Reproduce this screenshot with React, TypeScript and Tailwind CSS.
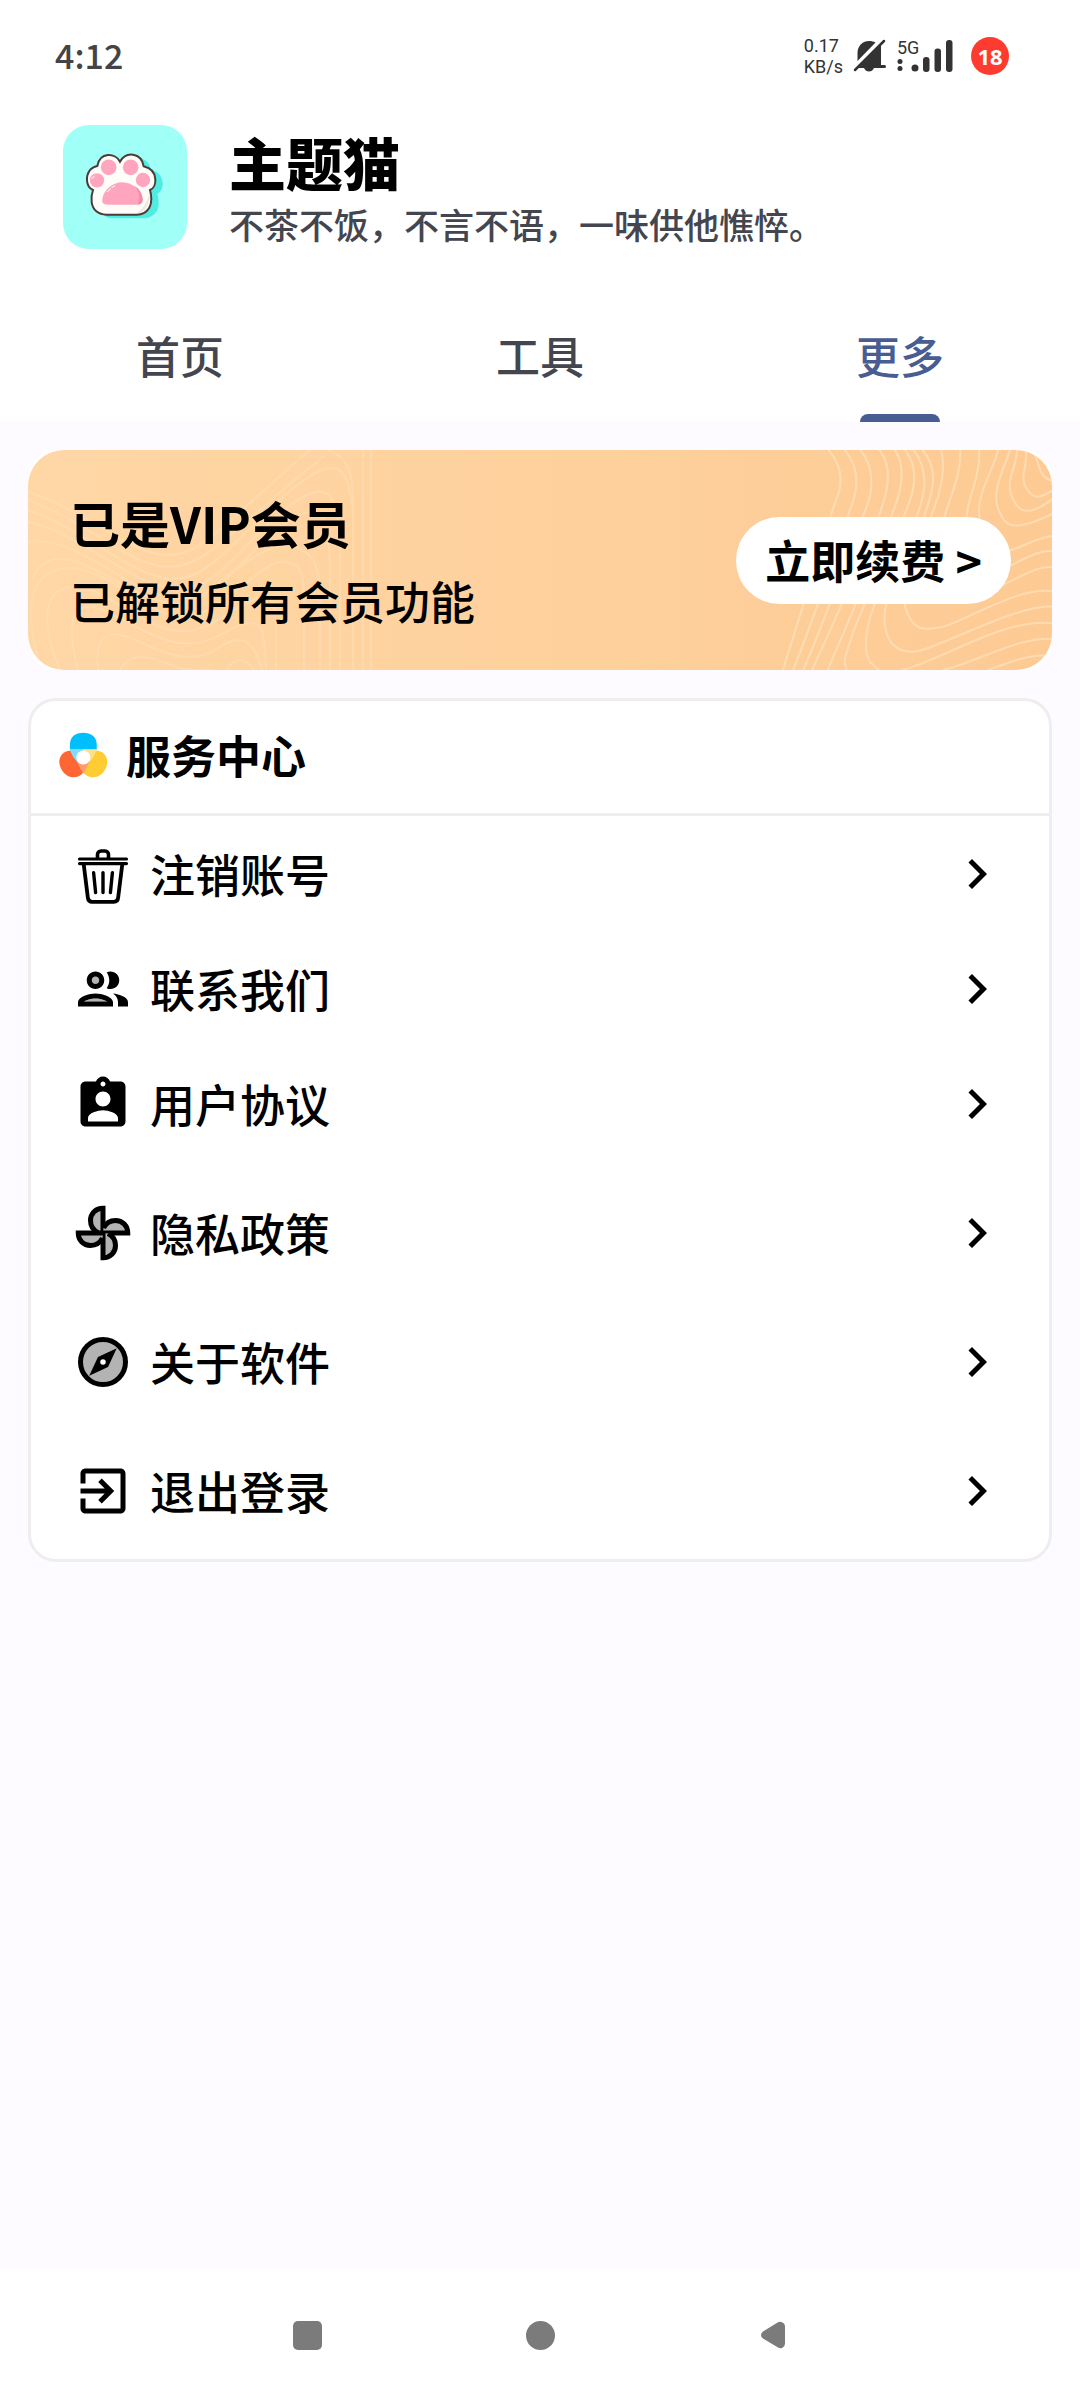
import type { ReactNode } from 'react'

const GREY = '#b3b3b3'

function TrashIcon() {
  return (
    <svg viewBox="0 0 60 60" className="size-[60px]" fill="none" stroke="#000" strokeLinecap="round">
      <path d="M24.5 14V10.5a3.5 3.5 0 0 1 3.5-3.5h4a3.5 3.5 0 0 1 3.5 3.5V14" strokeWidth="3.6" />
      <path d="M6.5 15h47M6.5 19.6h47" strokeWidth="3.2" />
      <path
        d="M10.8 21l4.1 33q.5 3.8 4.2 3.8h21.8q3.7 0 4.2-3.8L49.2 21"
        strokeWidth="3.8"
        strokeLinejoin="round"
      />
      <path d="M20.6 28.6l2 20M30 28.6v20M39.4 28.6l-2 20" strokeWidth="3.4" />
    </svg>
  )
}

function PeopleIcon() {
  return (
    <svg viewBox="0 0 24 24" className="size-[60px]">
      <circle cx="9" cy="8.5" r="1.6" fill={GREY} />
      <path d="M4.34 17c.84-.58 2.87-1.25 4.66-1.25s3.82.67 4.66 1.25H4.34z" fill={GREY} />
      <path d="M9 13.75c-2.34 0-7 1.17-7 3.5V19h14v-1.75c0-2.33-4.66-3.5-7-3.5zM4.34 17c.84-.58 2.87-1.25 4.66-1.25s3.82.67 4.66 1.25H4.34zM9 12c1.93 0 3.5-1.57 3.5-3.5S10.93 5 9 5 5.5 6.57 5.5 8.5 7.07 12 9 12zm0-5c.83 0 1.5.67 1.5 1.5S9.83 10 9 10s-1.5-.67-1.5-1.5S8.17 7 9 7zm7.04 6.81c1.16.84 1.96 1.96 1.96 3.44V19h4v-1.75c0-2.02-3.5-3.17-5.96-3.44zM15 12c1.93 0 3.5-1.57 3.5-3.5S16.93 5 15 5c-.54 0-1.04.13-1.5.35.63.89 1 1.98 1 3.15s-.37 2.26-1 3.15c.46.22.96.35 1.5.35z" />
    </svg>
  )
}

function BadgeIcon() {
  return (
    <svg viewBox="0 0 24 24" className="size-[60px]">
      <path d="M19 3h-4.18C14.4 1.84 13.3 1 12 1c-1.3 0-2.4.84-2.82 2H5c-1.1 0-2 .9-2 2v14c0 1.1.9 2 2 2h14c1.1 0 2-.9 2-2V5c0-1.1-.9-2-2-2zm-7 0c.55 0 1 .45 1 1s-.45 1-1 1-1-.45-1-1 .45-1 1-1zm0 4c1.66 0 3 1.34 3 3s-1.34 3-3 3-3-1.34-3-3 1.34-3 3-3zm6 12H6v-1.4c0-2 4-3.1 6-3.1s6 1.1 6 3.1V19z" />
    </svg>
  )
}

function FanIcon() {
  return (
    <svg viewBox="0 0 24 24" className="size-[60px]" fill={GREY} stroke="#000" strokeWidth="2">
      {[0, 90, 180, 270].map((deg) => (
        <path key={deg} d="M12 12V2.1C9.1 2.1 7 4.2 7 7c0 2 1 3.8 3 4.8" transform={`rotate(${deg} 12 12)`} />
      ))}
    </svg>
  )
}

function CompassIcon() {
  return (
    <svg viewBox="0 0 24 24" className="size-[60px]">
      <circle cx="12" cy="12" r="9" fill={GREY} stroke="#000" strokeWidth="2" />
      <path d="M6.5 17.5l7.51-3.49L17.5 6.5 9.99 9.99 6.5 17.5z" />
      <circle cx="12" cy="12" r="1.1" fill="#fff" />
    </svg>
  )
}

function ExitIcon() {
  return (
    <svg viewBox="0 0 24 24" className="size-[60px]">
      <path d="M10.09 15.59L11.5 17l5-5-5-5-1.41 1.41L12.67 11H3v2h9.67l-2.58 2.59zM19 3H5c-1.11 0-2 .9-2 2v4h2V5h14v14H5v-4H3v4c0 1.1.89 2 2 2h14c1.1 0 2-.9 2-2V5c0-1.1-.9-2-2-2z" />
    </svg>
  )
}

function ChevronIcon() {
  return (
    <svg viewBox="0 0 24 24" className="size-[60px]">
      <path d="M10 6L8.59 7.41 13.17 12l-4.58 4.59L10 18l6-6z" />
    </svg>
  )
}

const PAW =
  'M240 154C226 127 180 124 172 167C150 171 139 190 141 211C142 225 149 235 159 239C150 265 154 290 169 303C178 311 188 313 200 313H290C305 313 320 305 328 292C336 280 335 255 330 239C340 235 347 222 346 207C345 187 333 173 311 168C304 126 258 122 240 154Z'

function PawLogo() {
  return (
    <svg viewBox="69 44 372 372" className="size-[124px] shrink-0 rounded-[26px] bg-[#a0fff6]">
      <path d={PAW} transform="translate(22 11)" fill="#4fece1" />
      <path d={PAW} fill="#fffdfa" />
      <path d="M329 245c3 30-10 62-39 64c20-14 33-36 39-64z" fill="#f1e6e0" />
      <path d={PAW} fill="none" stroke="#4b3b3b" strokeWidth="6" />
      <g fill="#ffa5bf">
        <circle cx="206" cy="171" r="23.5" />
        <circle cx="272" cy="171" r="23.5" />
        <circle cx="171" cy="210" r="21.5" />
        <circle cx="309" cy="209" r="21.5" />
      </g>
      <path
        d="M187 266C191 238 220 216 247 216C280 216 305 242 308 266C309 279 300 283 288 283H204C191 283 185 278 187 266Z"
        fill="#ffa5bf"
      />
      <path d="M283 226c18 10 25 30 25 42c0 10-6 14-16 15c10-14 9-38-9-57z" fill="#f78aa6" />
      <path d="M202 244l10-9M216 231l8-4M156 205l7-8" stroke="#fff" strokeWidth="3" strokeLinecap="round" />
    </svg>
  )
}

function ServiceLogo() {
  return (
    <svg viewBox="177 152 148 137" className="h-[46px] w-[49px]">
      <path d="M210 204v-14C210 165 226 153 250 153S291 165 291 190v14z" fill="#00bfff" />
      <path d="M217 207C190 206 177 225 178 243C180 268 200 288 220 288C234 288 244 281 250 273L232 240Z" fill="#ff6633" />
      <path d="M284 207C311 206 324 225 323 243C321 268 301 288 281 288C267 288 257 281 250 273L268 240Z" fill="#ffcc33" />
      <path d="M210 204h42l-20 38C222 232 214 218 210 204z" fill="#7fdcff" />
      <path d="M249 204h42C287 218 280 230 269 242z" fill="#ffe08a" />
      <path d="M232 240h37C264 254 258 265 250 273C242 265 237 254 232 240z" fill="#ff9a73" />
      <circle cx="250.5" cy="228" r="21" fill="#fff" />
    </svg>
  )
}

// contour lines behind the VIP banner
const LEFT_LINES = [
  'M0 42C60 62 90 96 130 104S190 78 282 0',
  'M0 50C60 72 90 108 132 116S200 82 296 6',
  'M0 60C60 82 96 120 136 128S200 96 256 46S320 20 325 60V220',
  'M0 72C50 82 96 130 142 138S210 96 256 60S308 44 312 90V220',
  'M0 92C50 84 96 142 146 148S216 100 256 74S298 64 302 110V220',
  'M4 130C20 90 60 116 90 132S150 164 176 144S240 90 264 96S292 120 292 150V220',
  'M14 220C-20 120 30 104 76 128S144 184 186 156S240 110 258 112S276 130 276 150V220',
  'M32 220C0 140 34 126 72 144S144 200 190 170S246 140 248 170V220',
  'M50 220C34 160 50 148 80 162S150 210 194 184S236 180 238 220',
  'M70 220C66 180 84 178 112 192S166 214 190 198S226 190 234 220',
  'M92 220C100 204 116 204 140 214S170 218 184 220',
  'M198 220Q212 200 226 220',
  'M300 0C318 6 325 20 325 50V220',
  'M335 0V220',
  'M343 0V220',
]

const RIGHT_LINES = [
  'M838 60C880 110 880 160 860 210S780 480 705 720',
  'M885 60C925 110 925 170 905 225S820 500 735 720',
  'M930 60C970 110 970 180 945 240S850 510 765 720',
  'M985 60C1025 110 1010 180 990 240S880 520 790 720',
  'M1030 60C1065 110 1050 180 1025 245S920 520 835 720',
  'M1060 60C1105 120 1085 190 1060 250S930 540 905 620S882 690 890 720',
  'M1085 60C1130 120 1120 190 1095 255S970 490 952 590S960 700 985 720',
  'M1110 60C1165 120 1135 200 1115 260S1000 480 1000 560S1040 680 1110 660S1400 520 1487 530',
  'M1165 60C1180 120 1160 200 1135 260S1040 460 1060 530S1110 605 1170 590S1400 465 1487 485',
  'M1220 60C1225 130 1190 200 1175 260S1120 470 1200 500S1420 400 1487 412',
  'M1275 60C1280 130 1245 200 1240 250S1200 430 1280 430S1420 360 1487 362',
  'M1330 60C1320 110 1270 190 1275 250S1280 380 1340 368S1420 330 1487 318',
  'M1365 60C1350 110 1310 180 1330 235S1370 310 1487 252',
  'M1385 60C1385 110 1350 150 1370 200S1420 260 1487 208',
  'M1410 60C1420 100 1390 140 1412 175S1450 205 1487 182',
  'M1428 60C1455 90 1440 140 1487 152',
  'M1050 720C1150 700 1350 560 1487 580',
  'M1170 720C1260 700 1400 615 1487 628',
  'M1300 720C1360 700 1430 665 1487 680',
]

function BannerLines() {
  return (
    <svg
      viewBox="0 0 1024 220"
      preserveAspectRatio="none"
      className="absolute inset-0 h-full w-full"
      fill="none"
      stroke="#ffe6c4"
      strokeWidth="2"
      aria-hidden="true"
    >
      <g opacity="0.35">
        {LEFT_LINES.map((d) => (
          <path key={d} d={d} />
        ))}
      </g>
      <g opacity="0.6" strokeWidth="6" transform="matrix(.3444 0 0 .3333 512 -20)">
        {RIGHT_LINES.map((d) => (
          <path key={d} d={d} />
        ))}
      </g>
    </svg>
  )
}

function StatusBar() {
  return (
    <div className="flex h-28 items-center justify-between pr-[71px] pl-[55px] text-[#333]">
      <span className="pb-1 text-[34px] font-medium text-[#444]">4:12</span>
      <div className="flex items-center">
        <div className="font-['Roboto',sans-serif] text-[18px] leading-[21px]">
          <div>0.17</div>
          <div>KB/s</div>
        </div>
        <svg viewBox="0 0 34 34" className="ml-2.5 size-[34px]" fill="#333">
          <path d="M4.5 21V14C4.5 6.5 10 2 16 2c2.5 0 4.500.5 6.500 1.500L4.500 22z" />
          <path d="M28 5V26h3.500a1.500 1.500 0 0 1 0 3H21c-1 2.500-3 3.500-5 3.500s-4-1-5-3.500H4z" />
          <path d="M2 31L31 2" stroke="#333" strokeWidth="2.5" strokeLinecap="round" />
        </svg>
        <div className="relative ml-2.5 h-[34px] w-14">
          <span className="absolute -top-0.5 left-0 font-['Roboto',sans-serif] text-[18px] leading-[21px]">5G</span>
          <svg viewBox="0 0 56 34" className="h-[34px] w-14" fill="#333">
            <circle cx="3" cy="22.5" r="2.5" />
            <circle cx="3" cy="29.5" r="2.5" />
            <circle cx="18" cy="29" r="3.5" />
            <rect x="26" y="18" width="6.5" height="15" rx="3" />
            <rect x="37.5" y="9.5" width="6.5" height="23.5" rx="3" />
            <rect x="49" y="1" width="6.5" height="32" rx="3" />
          </svg>
        </div>
        <span className="ml-[18px] flex size-[38px] items-center justify-center rounded-full bg-[#ff3b30] font-['Open_Sans',sans-serif] text-[22px] leading-none font-bold text-white">
          18
        </span>
      </div>
    </div>
  )
}

const tabs = ['首页', '工具', '更多']

const services: { label: string; icon: ReactNode; spaced?: boolean }[] = [
  { label: '注销账号', icon: <TrashIcon /> },
  { label: '联系我们', icon: <PeopleIcon /> },
  { label: '用户协议', icon: <BadgeIcon /> },
  { label: '隐私政策', icon: <FanIcon />, spaced: true },
  { label: '关于软件', icon: <CompassIcon />, spaced: true },
  { label: '退出登录', icon: <ExitIcon />, spaced: true },
]

export default function App() {
  return (
    <div className="flex min-h-screen flex-col bg-[#fdfbff] font-['Noto_Sans_CJK_SC',sans-serif] text-black">
      <header className="bg-white">
        <StatusBar />
        <div className="flex px-[63px] pt-[13px] pb-[43px]">
          <PawLogo />
          <div className="ml-[42px] pt-1">
            <h1 className="text-[57px] leading-[64px] font-black">主题猫</h1>
            <p className="mt-1.5 text-[35px] leading-[50px] font-medium text-[#44464f]">
              不茶不饭，不言不语，一味供他憔悴。
            </p>
          </div>
        </div>
        <nav className="grid h-[130px] grid-cols-3">
          {tabs.map((tab) => {
            const active = tab === '更多'
            return (
              <button
                key={tab}
                className={`relative pb-1 text-[44px] font-medium ${active ? 'text-[#485d92]' : 'text-[#44464f]'}`}
              >
                {tab}
                {active && (
                  <span className="absolute bottom-0 left-1/2 h-2 w-20 -translate-x-1/2 rounded-t-lg bg-[#485d92]" />
                )}
              </button>
            )
          })}
        </nav>
      </header>

      <main className="flex-1 px-7 pt-7">
        <section className="rounded-[28px] bg-white">
          <div className="relative flex items-center justify-between overflow-hidden rounded-[36px] bg-linear-to-r from-[#ffd7a6] via-[#fed19d] to-[#fdca94] py-[37px] pr-[41px] pl-[42px]">
            <BannerLines />
            <div className="relative">
              <h2 className="text-[50px] leading-[70px] font-bold">已是VIP会员</h2>
              <p className="mt-3 text-[45px] leading-[64px] font-medium">已解锁所有会员功能</p>
            </div>
            <button className="relative flex h-[87px] items-center rounded-full bg-white px-[29px] text-[45px] font-bold whitespace-pre">
              立即续费 &gt;
            </button>
          </div>
        </section>

        <section className="mt-7 rounded-[28px] border-3 border-[#eee] bg-white pb-[11px]">
          <div className="flex h-[115px] items-center border-b-3 border-[#eee] pb-1 pl-7">
            <ServiceLogo />
            <h2 className="ml-[18px] text-[45px] font-bold">服务中心</h2>
          </div>
          <ul>
            {services.map((item) => (
              <li key={item.label} className={item.spaced ? 'mt-3.5' : ''}>
                <button className="flex h-[115px] w-full items-center pr-[42px] pl-[42px]">
                  {item.icon}
                  <span className="ml-[17px] text-[45px] font-medium">{item.label}</span>
                  <span className="ml-auto">
                    <ChevronIcon />
                  </span>
                </button>
              </li>
            ))}
          </ul>
        </section>
      </main>

      <footer className="flex h-[130px] items-center justify-center gap-[185px] bg-white">
        <button aria-label="最近任务" className="flex size-12 items-center justify-center">
          <span className="size-[29px] rounded-[5px] bg-[#7b7b7b]" />
        </button>
        <button aria-label="主屏幕" className="flex size-12 items-center justify-center">
          <span className="size-[29px] rounded-full bg-[#7b7b7b]" />
        </button>
        <button aria-label="返回" className="flex size-12 items-center justify-center">
          <svg viewBox="0 0 24 28" className="h-7 w-6" fill="#7b7b7b">
            <path d="M17 1.2Q19 .2 21 1.2Q24 2.5 24 5.5V22.5Q24 25.5 21.5 26.8Q19 28 17 26.5L2 17.5Q0 16 0 14T2 10.500Z" />
          </svg>
        </button>
      </footer>
    </div>
  )
}
